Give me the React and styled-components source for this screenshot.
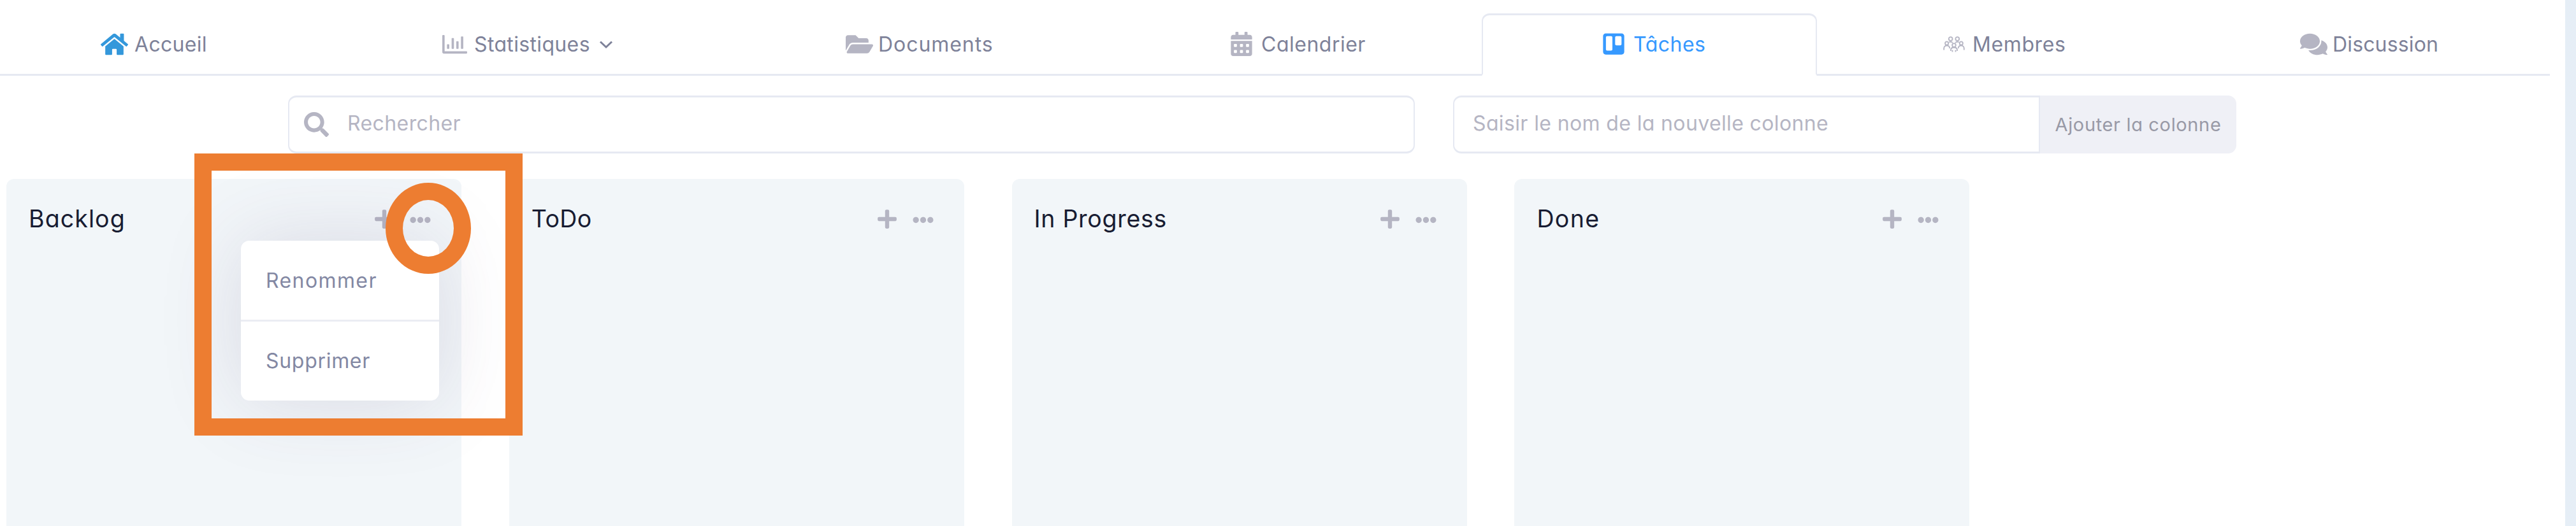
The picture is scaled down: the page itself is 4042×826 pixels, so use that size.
import React from "react";
import styled, { createGlobalStyle } from "styled-components";
import {
  FaHome, FaRegChartBar, FaFolderOpen, FaCalendarAlt, FaTrello, FaComments, FaSearch, FaPlus, FaEllipsisH,
} from "react-icons/fa";

const Global = createGlobalStyle`
  * { box-sizing: border-box; }
  body {
    margin: 0;
    background: #fff;
    font-family: Inter, "Open Sans", sans-serif;
    font-feature-settings: "cv11";
  }
`;

const Page = styled.div`
  position: relative;
  width: 4042px;
  height: 826px;
  overflow: hidden;
  display: flex;
  justify-content: space-between;
  background: #fff;
`;

const Main = styled.main`
  width: 4001px;
`;

const Gutter = styled.aside`
  width: 17px;
  background: #e6eef6;
`;

const Tabs = styled.nav`
  display: flex;
  height: 119px;
  padding-top: 21px;
  border-bottom: 3px solid #e6e9f2;
`;

const Tab = styled.a`
  display: flex;
  align-items: center;
  flex: 0 0 ${(p) => p.$width}px;
  height: 98px;
  padding-left: ${(p) => p.$inset}px;
  border: solid transparent;
  border-width: 3px 2px;
  border-radius: 12px 12px 0 0;
  color: #b5b5c3;
  ${(p) =>
    p.$active &&
    `
      color: #3699ff;
      border-color: #e6e9f2;
      border-bottom-color: #fff;
      background: #fff;
    `}
`;

const TabIcon = styled.span`
  display: flex;
  margin: -2px ${(p) => p.$gap}px 0 0;
`;

const Label = styled.span`
  font-size: 32px;
  line-height: 44px;
  white-space: nowrap;
  letter-spacing: ${(p) => p.$track}px;
  color: ${(p) => (p.$active ? "#3699ff" : "#7e8299")};
`;

const Chevron = styled.svg`
  margin-left: 14px;
  color: #7e8299;
`;

const Tools = styled.div`
  display: flex;
  height: 91px;
  margin: 31px 0 0 452px;
`;

const SearchBox = styled.label`
  display: flex;
  align-items: center;
  width: 1768px;
  padding-left: 23px;
  border: solid #e6e9f2;
  border-width: 3px 2px;
  border-radius: 13px;
  color: #b5b5c3;
`;

const Placeholder = styled.span`
  font-size: 32px;
  line-height: 44px;
  white-space: nowrap;
  color: #b5b5c3;
  letter-spacing: ${(p) => p.$track}px;
  margin: -3px 0 0 ${(p) => p.$inset}px;
`;

const NewColumn = styled.div`
  display: flex;
  margin-left: 60px;
`;

const NameField = styled.label`
  display: flex;
  align-items: center;
  width: 921px;
  border: solid #e6e9f2;
  border-width: 3px 2px;
  border-radius: 13px 0 0 13px;
`;

const AddButton = styled.button`
  width: 308px;
  padding: 0 0 1px;
  border: 0;
  border-radius: 0 13px 13px 0;
  background: #eff0f6;
  color: #9899a6;
  font: inherit;
  font-size: 29px;
  letter-spacing: 0.65px;
  white-space: nowrap;
`;

const Board = styled.section`
  display: flex;
  gap: 74.8px;
  margin: 40px 0 0 10px;
`;

const Column = styled.article`
  flex: 0 0 714px;
  height: 560px;
  border-radius: 12px;
  background: #f2f6f9;
`;

const ColumnHead = styled.header`
  display: flex;
  align-items: center;
  height: 126px;
  padding: 0 48px 0 35px;
  color: #b5b5c3;
`;

const Title = styled.h3`
  flex: 1;
  margin: 0;
  font-size: 37.5px;
  font-weight: 400;
  line-height: 50px;
  letter-spacing: ${(p) => p.$track}px;
  color: #181c32;
`;

const PlusIcon = styled(FaPlus)`
  width: 30px;
  height: 34px;
  margin-right: 25px;
`;

const DotsIcon = styled(FaEllipsisH)`
  width: 33px;
  height: 33px;
  margin-top: 3px;
`;

const Menu = styled.div`
  position: absolute;
  left: 378px;
  top: 378px;
  width: 311px;
  height: 251px;
  border-radius: 13px;
  background: #fff;
  box-shadow: 0 0 128px rgba(82, 63, 105, 0.15);
`;

const MenuItem = styled.div`
  display: flex;
  align-items: center;
  height: ${(p) => (p.$divided ? 127 : 122)}px;
  padding-left: 39px;
  border-bottom: ${(p) => (p.$divided ? "3px solid #ebedf3" : "0")};
  font-size: 32px;
  letter-spacing: ${(p) => p.$track}px;
  color: #8388a3;
`;

const FrameMark = styled.div`
  position: absolute;
  left: 305px;
  top: 241px;
  width: 515px;
  height: 443px;
  border: 27px solid #ed7d31;
`;

const RingMark = styled.div`
  position: absolute;
  left: 605px;
  top: 287px;
  width: 134px;
  height: 143px;
  border: 27px solid #ed7d31;
  border-radius: 50%;
`;

function MembersIcon() {
  return (
    <svg width="34" height="25" viewBox="0 0 34 25" fill="none" stroke="currentColor" strokeWidth="1.8">
      <circle cx="11.700" cy="4" r="2.900" />
      <circle cx="22.300" cy="4" r="2.900" />
      <circle cx="5.700" cy="11" r="2.600" />
      <circle cx="28.300" cy="11" r="2.600" />
      <circle cx="17" cy="14" r="2.800" />
      <path d="M9.500 9.500c1.600-1.600 4.400-1.200 5.300 1M24.500 9.500c-1.600-1.600-4.400-1.200-5.300 1" />
      <path d="M1.200 21.500v-2.500c0-2.600 1.600-4.300 4.500-4.300s4.500 1.700 4.500 4.300M32.800 21.500v-2.500c0-2.600-1.600-4.300-4.500-4.300s-4.500 1.700-4.500 4.300" />
      <path d="M12 23v-1.500c0-2.600 2-4 5-4s5 1.400 5 4V23M14.500 24.500v-3M19.500 24.500v-3" />
    </svg>
  );
}

const tabs = [
  { label: "Accueil", icon: <FaHome size={43} color="#3498db" />, width: 533, inset: 156, gap: 10, track: 0.3 },
  { label: "Statistiques", icon: <FaRegChartBar size={39} />, width: 597, inset: 159, gap: 11, track: 0.35, chevron: true },
  { label: "Documents", icon: <FaFolderOpen size={43} />, width: 624, inset: 195, gap: 8, track: 0.95 },
  { label: "Calendrier", icon: <FaCalendarAlt size={38} />, width: 571, inset: 173, gap: 12, track: 0.5 },
  { label: "Tâches", icon: <FaTrello size={38} />, width: 526, inset: 186, gap: 12, track: 0.5, active: true },
  { label: "Membres", icon: <MembersIcon />, width: 583, inset: 196, gap: 12, track: 0.6 },
  { label: "Discussion", icon: <FaComments size={43} />, width: 567, inset: 173, gap: 8, track: 0.15 },
];

const columns = [
  { title: "Backlog", track: 1.1 },
  { title: "ToDo", track: 0.4 },
  { title: "In Progress", track: 0.7 },
  { title: "Done", track: 1.4 },
];

export default function App() {
  return (
    <>
      <Global />
      <Page>
        <Main>
          <Tabs>
            {tabs.map((t) => (
              <Tab key={t.label} $width={t.width} $inset={t.inset} $active={t.active}>
                <TabIcon $gap={t.gap}>{t.icon}</TabIcon>
                <Label $track={t.track} $active={t.active}>{t.label}</Label>
                {t.chevron && (
                  <Chevron width="22" height="14" viewBox="0 0 22 14" fill="none" stroke="currentColor" strokeWidth="3">
                    <path d="M2 2.500l9 8.500 9-8.500" />
                  </Chevron>
                )}
              </Tab>
            ))}
          </Tabs>
          <Tools>
            <SearchBox>
              <FaSearch size={39} />
              <Placeholder $inset={29} $track={0.4}>Rechercher</Placeholder>
            </SearchBox>
            <NewColumn>
              <NameField>
                <Placeholder $inset={29} $track={0.37}>Saisir le nom de la nouvelle colonne</Placeholder>
              </NameField>
              <AddButton>Ajouter la colonne</AddButton>
            </NewColumn>
          </Tools>
          <Board>
            {columns.map((c) => (
              <Column key={c.title}>
                <ColumnHead>
                  <Title $track={c.track}>{c.title}</Title>
                  <PlusIcon />
                  <DotsIcon />
                </ColumnHead>
              </Column>
            ))}
          </Board>
        </Main>
        <Gutter />
        <Menu>
          <MenuItem $divided $track={1.4}>Renommer</MenuItem>
          <MenuItem $track={0.7}>Supprimer</MenuItem>
        </Menu>
        <FrameMark />
        <RingMark />
      </Page>
    </>
  );
}
